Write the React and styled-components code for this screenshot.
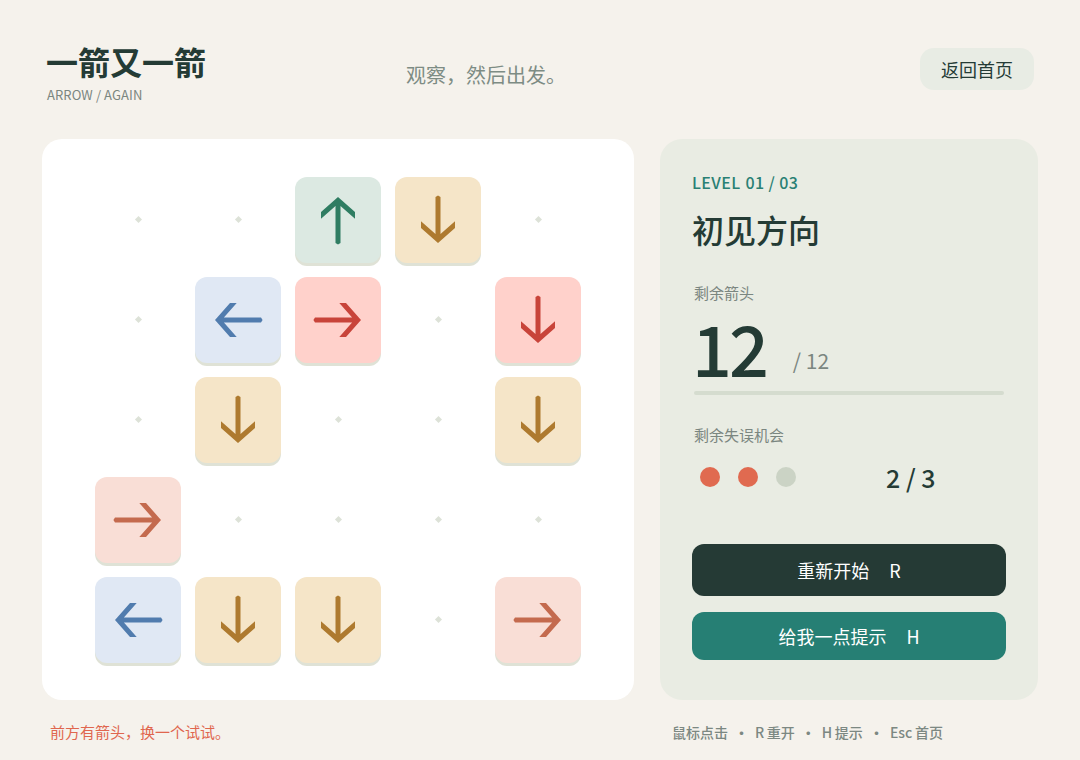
import React from "react";
import styled, { createGlobalStyle } from "styled-components";

const Global = createGlobalStyle`
  html, body { margin: 0; padding: 0; background: #f5f2ec; }
  body { font-family: "Noto Sans CJK SC", "Noto Sans", sans-serif; color: #243b35; }
  * { box-sizing: border-box; }
`;

const Page = styled.div`
  width: 1080px;
  height: 760px;
  padding: 40px 42px 0;
  overflow: hidden;
`;

const Header = styled.header`
  display: grid;
  grid-template-columns: 364px 1fr auto;
  align-items: start;
  height: 99px;
`;

const Brand = styled.div`
  padding-left: 4px;
`;

const Title = styled.h1`
  margin: 0;
  font-size: 32px;
  line-height: 42px;
  font-weight: 700;
  color: #243b35;
`;

const Sub = styled.div`
  margin-top: 4px;
  margin-left: 1px;
  font-size: 13px;
  line-height: 18px;
  letter-spacing: 0.1px;
  color: #7b8680;
`;

const Tagline = styled.div`
  margin-top: 21px;
  font-size: 20px;
  line-height: 28px;
  color: #7d8c84;
`;

const HomeButton = styled.button`
  margin-top: 8px;
  margin-right: 4px;
  height: 42px;
  padding: 0 21px;
  border: none;
  border-radius: 14px;
  background: #e8ece4;
  color: #243b35;
  font-size: 18px;
  font-family: inherit;
  font-weight: 400;
  cursor: pointer;
`;

const Main = styled.main`
  display: grid;
  grid-template-columns: 592px 378px;
  gap: 26px;
  height: 561px;
`;

const Board = styled.section`
  background: #ffffff;
  border-radius: 20px;
  display: grid;
  place-items: center;
`;

const Grid = styled.div`
  display: grid;
  grid-template-columns: repeat(5, 100px);
  grid-template-rows: repeat(5, 100px);
`;

const Cell = styled.div`
  display: grid;
  place-items: center;
`;

const Dot = styled.span`
  width: 5px;
  height: 5px;
  background: #dde2d8;
  transform: rotate(45deg);
`;

const palette = {
  green: { bg: "#dce9e2", fg: "#2f7d62" },
  yellow: { bg: "#f5e5c8", fg: "#ae7a2f" },
  blue: { bg: "#e0e8f4", fg: "#517cae" },
  red: { bg: "#ffd1cb", fg: "#c8443a" },
  salmon: { bg: "#f9ded6", fg: "#c46a4e" },
};

const Tile = styled.button`
  width: 86px;
  height: 86px;
  padding: 0;
  border: none;
  border-radius: 12px;
  background: ${(p) => palette[p.$tone].bg};
  color: ${(p) => palette[p.$tone].fg};
  box-shadow: 0 3px 0 #dfe2d6;
  display: block;
  cursor: pointer;
  svg { display: block; }
`;

const rot = { right: 0, down: 90, left: 180, up: -90 };

function Arrow({ dir }) {
  return (
    <svg width="86" height="86" viewBox="0 0 86 86">
      <polygon
        transform={`rotate(${rot[dir]} 43 43)`}
        fill="currentColor"
        points="66,43 51,26 44.3,26 57.1,40.5 20,40.5 18.4,43 20,45.5 57.1,45.5 44.3,60 51,60"
      />
    </svg>
  );
}

const board = [
  [null, null, ["up", "green"], ["down", "yellow"], null],
  [null, ["left", "blue"], ["right", "red"], null, ["down", "red"]],
  [null, ["down", "yellow"], null, null, ["down", "yellow"]],
  [["right", "salmon"], null, null, null, null],
  [["left", "blue"], ["down", "yellow"], ["down", "yellow"], null, ["right", "salmon"]],
];

const Panel = styled.aside`
  background: #e9ece3;
  border-radius: 22px;
  padding: 32px 32px 40px;
  display: flex;
  flex-direction: column;
`;

const Level = styled.div`
  font-size: 16px;
  line-height: 22px;
  font-weight: 500;
  color: #2a8074;
  letter-spacing: 0.4px;
`;

const LevelNum = styled.span`
  margin-left: 5px;
`;

const LevelName = styled.h2`
  margin: 14px 0 0;
  font-size: 32px;
  line-height: 44px;
  font-weight: 500;
  color: #243b35;
`;

const Label = styled.div`
  margin-top: ${(p) => p.$mt}px;
  padding-left: 2px;
  font-size: 15px;
  line-height: 20px;
  color: #7b8680;
  font-weight: 400;
`;

const CountRow = styled.div`
  display: flex;
  align-items: flex-end;
  margin-top: 14px;
`;

const Big = styled.span`
  font-size: 70px;
  line-height: 60px;
  font-weight: 500;
  letter-spacing: -3px;
  color: #243b35;
`;

const Total = styled.span`
  margin-left: 27px;
  margin-bottom: 6px;
  font-size: 21px;
  line-height: 22px;
  color: #7b8680;
`;

const Bar = styled.div`
  margin: 14px 2px 0;
  height: 4px;
  border-radius: 2px;
  background: #d5dccf;
`;

const LivesRow = styled.div`
  margin-top: 16px;
  height: 32px;
  display: flex;
  align-items: center;
  padding-left: 8px;
`;

const Lives = styled.div`
  display: flex;
  gap: 18px;
`;

const Life = styled.span`
  width: 20px;
  height: 20px;
  border-radius: 50%;
  background: ${(p) => (p.$on ? "#e06a50" : "#cbd3c5")};
`;

const LivesCount = styled.span`
  margin-left: 90px;
  font-size: 25px;
  line-height: 32px;
  font-weight: 500;
  color: #243b35;
`;

const Actions = styled.div`
  margin-top: auto;
  display: flex;
  flex-direction: column;
  gap: 16px;
`;

const ActionButton = styled.button`
  height: ${(p) => (p.$primary ? 52 : 48)}px;
  border: none;
  border-radius: 12px;
  background: ${(p) => (p.$primary ? "#253a35" : "#267f74")};
  color: #ffffff;
  font-size: 18px;
  font-family: inherit;
  font-weight: 400;
  cursor: pointer;
`;

const Key = styled.span`
  margin-left: 20px;
`;

const Footer = styled.footer`
  display: grid;
  grid-template-columns: 592px 378px;
  gap: 26px;
  margin-top: 22px;
  font-size: 15px;
  line-height: 20px;
`;

const Message = styled.div`
  padding-left: 8px;
  color: #e0664e;
`;

const Hints = styled.div`
  padding-left: 12px;
  display: flex;
  align-items: center;
  font-size: 14px;
  font-weight: 500;
  color: #7c8882;
  white-space: pre;
  word-spacing: -0.5px;
`;

const Sep = styled.span`
  display: inline-block;
  width: 27px;
  text-align: center;
  font-weight: 700;
`;

export default function App() {
  return (
    <Page>
      <Global />
      <Header>
        <Brand>
          <Title>一箭又一箭</Title>
          <Sub>ARROW / AGAIN</Sub>
        </Brand>
        <Tagline>观察，然后出发。</Tagline>
        <HomeButton>返回首页</HomeButton>
      </Header>
      <Main>
        <Board>
          <Grid>
            {board.flatMap((row, r) =>
              row.map((c, i) => (
                <Cell key={`${r}-${i}`}>
                  {c ? (
                    <Tile $tone={c[1]}>
                      <Arrow dir={c[0]} />
                    </Tile>
                  ) : (
                    <Dot />
                  )}
                </Cell>
              ))
            )}
          </Grid>
        </Board>
        <Panel>
          <Level>
            LEVEL<LevelNum>01 / 03</LevelNum>
          </Level>
          <LevelName>初见方向</LevelName>
          <Label $mt={32}>剩余箭头</Label>
          <CountRow>
            <Big>12</Big>
            <Total>/ 12</Total>
          </CountRow>
          <Bar />
          <Label $mt={30}>剩余失误机会</Label>
          <LivesRow>
            <Lives>
              <Life $on />
              <Life $on />
              <Life />
            </Lives>
            <LivesCount>2 / 3</LivesCount>
          </LivesRow>
          <Actions>
            <ActionButton $primary>
              重新开始<Key>R</Key>
            </ActionButton>
            <ActionButton>
              给我一点提示<Key>H</Key>
            </ActionButton>
          </Actions>
        </Panel>
      </Main>
      <Footer>
        <Message>前方有箭头，换一个试试。</Message>
        <Hints>
          <span>鼠标点击</span>
          <Sep>·</Sep>
          <span>R 重开</span>
          <Sep>·</Sep>
          <span>H 提示</span>
          <Sep>·</Sep>
          <span>Esc 首页</span>
        </Hints>
      </Footer>
    </Page>
  );
}
